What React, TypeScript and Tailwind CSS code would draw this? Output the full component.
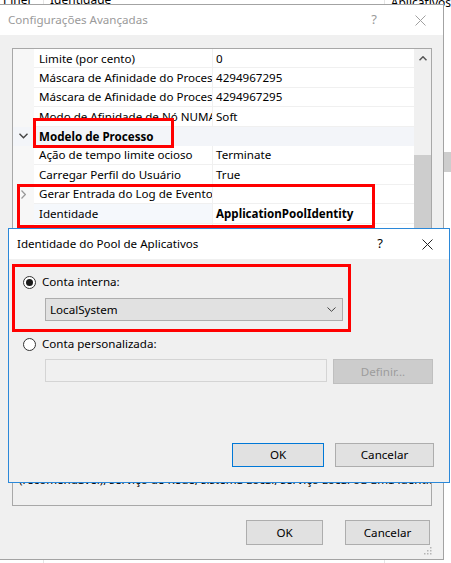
import React from "react"

type Row =
  | { kind: "cat"; label: string }
  | { kind: "prop"; name: string; value: string; bold?: boolean; expandable?: boolean; selected?: boolean }

const rows: Row[] = [
  { kind: "prop", name: "Limite (por cento)", value: "0" },
  { kind: "prop", name: "Máscara de Afinidade do Processador", value: "4294967295" },
  { kind: "prop", name: "Máscara de Afinidade do Processador (64 bits)", value: "4294967295" },
  { kind: "prop", name: "Modo de Afinidade de Nó NUMA", value: "Soft" },
  { kind: "cat", label: "Modelo de Processo" },
  { kind: "prop", name: "Ação de tempo limite ocioso", value: "Terminate" },
  { kind: "prop", name: "Carregar Perfil do Usuário", value: "True" },
  { kind: "prop", name: "Gerar Entrada do Log de Eventos", value: "", expandable: true },
  { kind: "prop", name: "Identidade", value: "ApplicationPoolIdentity", bold: true, selected: true },
  { kind: "prop", name: "Tempo limite ocioso (minutos)", value: "20" },
  { kind: "prop", name: "Máximo de Processos de Trabalho", value: "1" },
  { kind: "prop", name: "Ping Habilitado", value: "True" },
  { kind: "prop", name: "Período Máximo de Resposta de Ping", value: "90" },
  { kind: "prop", name: "Período de Ping (segundos)", value: "30" },
  { kind: "prop", name: "Tempo Limite de Desligamento", value: "90" },
  { kind: "prop", name: "Tempo Limite de Inicialização", value: "90" },
]

const font = "font-['Noto_Sans','Liberation_Sans',sans-serif]"

function CloseIcon({ color }: { color: string }) {
  return (
    <svg width="11" height="11" viewBox="0 0 11 11">
      <path d="M0.5 0.5 L10.5 10.5 M10.5 0.5 L0.5 10.5" stroke={color} strokeWidth="1" />
    </svg>
  )
}

function Radio({ checked }: { checked?: boolean }) {
  return (
    <div className="w-[13px] h-[13px] shrink-0 rounded-full border border-[#333] bg-white flex items-center justify-center">
      {checked && <div className="w-[7px] h-[7px] rounded-full bg-[#1a1a1a]" />}
    </div>
  )
}

function PropRow({ row }: { row: Row }) {
  if (row.kind === "cat") {
    return (
      <div className="flex shrink-0 h-[19.4px] bg-[#f3f5f9]">
        <div className="w-[21px] flex items-center justify-center">
          <svg width="9" height="6" viewBox="0 0 9 6">
            <path d="M0.5 0.8 L4.5 4.8 L8.5 0.8" fill="none" stroke="#444" strokeWidth="1.4" />
          </svg>
        </div>
        <div className="flex-1 pl-[5px] flex items-center font-bold text-black">{row.label}</div>
      </div>
    )
  }
  return (
    <div className="flex shrink-0 h-[19.4px]">
      <div className="w-[21px] flex items-center justify-center bg-[#f7f7f7]">
        {row.expandable && (
          <svg width="5" height="9" viewBox="0 0 5 9">
            <path d="M0.5 0.5 L4.3 4.5 L0.5 8.5" fill="none" stroke="#999" strokeWidth="1.2" />
          </svg>
        )}
      </div>
      <div
        className={`w-[179px] pl-[5px] flex items-center border-b border-r border-[#f0f0f0] overflow-hidden whitespace-nowrap ${
          row.selected ? "bg-[#f5f8fc]" : "bg-white"
        }`}
      >
        {row.name}
      </div>
      <div
        className={`flex-1 pl-[3px] flex items-center border-b border-[#f0f0f0] bg-white whitespace-nowrap overflow-hidden ${
          row.bold ? "font-bold" : ""
        }`}
      >
        {row.value}
      </div>
    </div>
  )
}

function OuterWindow() {
  return (
    <div className="absolute left-[-1px] top-[4px] w-[445px] h-[556px] border border-[#a3a3a3] bg-[#f0f0f0] flex flex-col">
      {/* title bar */}
      <div className="h-[30px] shrink-0 bg-white flex items-center pl-[8px] pr-[17px]">
        <span className="flex-1 text-[#9a9a9a] text-[11.6px]">Configurações Avançadas</span>
        <span className="text-[#9a9a9a] text-[13px] mr-[38px]">?</span>
        <CloseIcon color="#a0a0a0" />
      </div>

      <div className="flex-1 flex flex-col pl-[12px] pr-[11px] pt-[13px]">
        {/* property grid */}
        <div className="h-[340px] shrink-0 border border-[#a8a8a8] bg-white flex text-[11.6px] text-black">
          <div className="flex-1 flex flex-col overflow-hidden">
            {rows.map((r, i) => (
              <PropRow key={i} row={r} />
            ))}
          </div>
          <div className="w-[17px] bg-[#f0f0f0] flex flex-col items-center">
            <div className="h-[19px] flex items-center">
              <svg width="8" height="5" viewBox="0 0 8 5">
                <path d="M0.5 4.3 L4 0.8 L7.5 4.3" fill="none" stroke="#555" strokeWidth="1.5" />
              </svg>
            </div>
            <div className="h-[87px]" />
            <div className="w-[17px] h-[150px] bg-[#cdcdcd]" />
          </div>
        </div>

        {/* description */}
        <div className="mt-[20px] h-[98px] shrink-0 border border-[#a8a8a8] flex flex-col justify-end pl-[6px] pb-[17px] text-[11.6px] text-black leading-[16px] overflow-hidden whitespace-nowrap">
          <div className="font-bold">Identidade</div>
          <div>[identityType, username, password] Configura o pool de aplicativos</div>
          <div>(recomendável), serviço de Rede, sistema Local, serviço Local ou uma identidade</div>
        </div>

        {/* buttons */}
        <div className="mt-[14px] shrink-0 flex justify-end gap-[22px] pr-[2px] text-[11.6px] text-black">
          <div className="w-[77px] h-[25px] bg-[#e1e1e1] border border-[#adadad] flex items-center justify-center">OK</div>
          <div className="w-[85px] h-[25px] bg-[#e1e1e1] border border-[#adadad] flex items-center justify-center">Cancelar</div>
        </div>
        <div className="flex justify-end mt-[2px]">
          <svg width="8" height="8" viewBox="0 0 8 8">
            <rect x="6" y="0" width="1.5" height="1.5" fill="#b5b5b5" />
            <rect x="3" y="3" width="1.5" height="1.5" fill="#b5b5b5" />
            <rect x="6" y="3" width="1.5" height="1.5" fill="#b5b5b5" />
            <rect x="0" y="6" width="1.5" height="1.5" fill="#b5b5b5" />
            <rect x="3" y="6" width="1.5" height="1.5" fill="#b5b5b5" />
            <rect x="6" y="6" width="1.5" height="1.5" fill="#b5b5b5" />
          </svg>
        </div>
      </div>
    </div>
  )
}

function IdentityDialog() {
  return (
    <div className="absolute left-[8px] top-[228px] w-[442px] h-[255px] border border-[#2b88d9] bg-[#f0f0f0] flex flex-col text-[11.6px] text-black">
      <div className="h-[30px] shrink-0 bg-white flex items-center pl-[8px] pr-[16px]">
        <span className="flex-1">Identidade do Pool de Aplicativos</span>
        <span className="text-[13px] mr-[39px]">?</span>
        <CloseIcon color="#222" />
      </div>

      <div className="flex-1 flex flex-col pl-[14px] pr-[15px] pt-[16px]">
        <div className="flex items-center gap-[6px] h-[14px]">
          <Radio checked />
          <span>Conta interna:</span>
        </div>
        <div className="ml-[22px] mt-[9px] w-[298px] h-[23px] bg-[#e1e1e1] border border-[#adadad] flex items-center pl-[4px] pr-[6px]">
          <span className="flex-1">LocalSystem</span>
          <svg width="9" height="5" viewBox="0 0 9 5">
            <path d="M0.5 0.5 L4.5 4.3 L8.5 0.5" fill="none" stroke="#444" strokeWidth="1" />
          </svg>
        </div>

        <div className="flex items-center gap-[6px] h-[14px] mt-[16px]">
          <Radio />
          <span>Conta personalizada:</span>
        </div>
        <div className="ml-[22px] mt-[8px] flex items-start">
          <div className="w-[282px] h-[23px] bg-[#f0f0f0] border border-[#d4d4d4]" />
          <div className="ml-[6px] w-[100px] h-[25px] bg-[#cccccc] border border-[#bfbfbf] flex items-center justify-center text-[#9c9c9c]">
            Definir...
          </div>
        </div>

        <div className="mt-[59px] flex justify-end gap-[11px]">
          <div className="w-[92px] h-[24px] bg-[#e1e1e1] border border-[#0078d7] flex items-center justify-center">OK</div>
          <div className="w-[99px] h-[24px] bg-[#e1e1e1] border border-[#adadad] flex items-center justify-center">Cancelar</div>
        </div>
      </div>
    </div>
  )
}

export default function App() {
  return (
    <div className={`relative w-[451px] h-[563px] bg-white overflow-hidden ${font}`}>
      {/* list view behind the dialogs */}
      <div className="flex h-full text-[12px] text-black">
        <div className="w-[46px] border-r border-[#e5e5e5] pl-[3px]">
          <div className="-mt-[9px]">Pinel</div>
        </div>
        <div className="w-[357px] border-r border-[#e5e5e5] pl-[6px]">
          <div className="-mt-[9px]">Identidade</div>
        </div>
        <div className="flex-1 pl-[6px] flex flex-col">
          <div className="-mt-[6px] whitespace-nowrap">Aplicativos</div>
          <div className="mt-[140px] ml-auto w-[7px] h-[20px] bg-[#cdcdcd]" />
        </div>
      </div>

      <OuterWindow />

      {/* annotation boxes */}
      <div className="absolute left-[33px] top-[118px] w-[141px] h-[30px] border-[3px] border-[#ff0000]" />
      <div className="absolute left-[17px] top-[184px] w-[358px] h-[44px] border-[3px] border-[#ff0000]" />

      <IdentityDialog />

      <div className="absolute left-[12px] top-[264px] w-[339px] h-[68px] border-[3px] border-[#ff0000]" />
    </div>
  )
}
